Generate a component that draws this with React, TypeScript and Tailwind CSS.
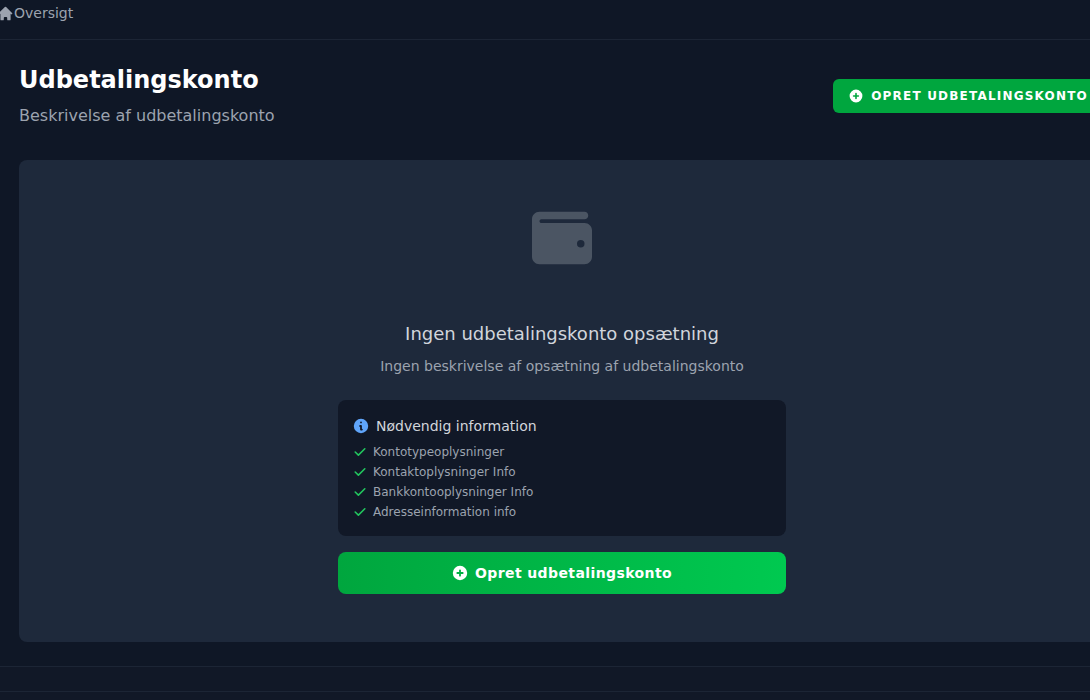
import { HiCheck, HiHome, HiInformationCircle, HiPlusCircle } from 'react-icons/hi';
import { FaWallet } from 'react-icons/fa6';

const requirements = [
  'Kontotypeoplysninger',
  'Kontaktoplysninger Info',
  'Bankkontooplysninger Info',
  'Adresseinformation info',
];

export default function App() {
  return (
    <div className="h-[700px] w-[1090px] overflow-hidden bg-[#0f1726] font-['DejaVu_Sans',sans-serif]">
      <div className="w-[1124px]">
        <div className="flex h-[40px] items-start border-b border-[#1c2535] pt-[5px]">
          <div className="-ml-[3px] flex items-center text-[14px] leading-[17px] text-[#9ca3af]">
            <HiHome className="h-[17px] w-[17px]" />
            <span>Oversigt</span>
          </div>
        </div>

        <div className="px-[19px]">
          <div className="flex items-center justify-between pt-[24px] pb-[32px]">
            <div>
              <h1 className="text-[24px] leading-[32px] font-bold text-white">Udbetalingskonto</h1>
              <p className="mt-[8px] text-[16px] leading-[24px] text-[#9ca3af]">Beskrivelse af udbetalingskonto</p>
            </div>
            <button className="flex h-[34px] items-center gap-[8px] rounded-md bg-[#00a63e] pr-[17px] pl-[16px] text-[12px] font-bold tracking-[1.2px] text-white uppercase">
              <HiPlusCircle className="-mx-[1px] h-[16px] w-[16px]" />
              Opret udbetalingskonto
            </button>
          </div>

          <div className="flex flex-col items-center rounded-lg bg-[#1e293b] p-[48px]">
            <FaWallet className="h-[60px] w-[60px] text-[#4b5563]" />
            <h2 className="mt-[52px] text-[18px] leading-[28px] font-medium text-[#d1d5db]">
              Ingen udbetalingskonto opsætning
            </h2>
            <p className="mt-[8px] text-[14px] leading-[20px] text-[#9ca3af]">
              Ingen beskrivelse af opsætning af udbetalingskonto
            </p>

            <div className="mt-[24px] w-[448px] rounded-lg bg-[#111827] px-[16px] pt-[16px] pb-[14px]">
              <div className="flex items-center gap-[6px] text-[14px] leading-[20px] font-medium text-[#d1d5db]">
                <HiInformationCircle className="-ml-[2px] h-[18px] w-[18px] text-[#60a5fa]" />
                Nødvendig information
              </div>
              <ul className="mt-[6px] flex flex-col">
                {requirements.map((item) => (
                  <li key={item} className="flex h-[20px] items-center gap-[5px] text-[12px] text-[#9ca3af]">
                    <HiCheck className="-ml-[2px] h-[16px] w-[16px] text-[#22c55e]" />
                    {item}
                  </li>
                ))}
              </ul>
            </div>

            <button className="mt-[16px] flex h-[42px] w-[448px] items-center justify-center gap-[6px] rounded-lg bg-gradient-to-r from-[#00a63e] to-[#00c950] text-[14px] font-bold tracking-[0.4px] text-white">
              <HiPlusCircle className="-ml-[1px] h-[18px] w-[18px]" />
              Opret udbetalingskonto
            </button>
          </div>
        </div>

        <div className="mt-[24px] h-[26px] border-y border-[#1c2535] bg-[#111827]" />
        <div className="h-[10px] bg-[#111827]" />
      </div>
    </div>
  );
}
